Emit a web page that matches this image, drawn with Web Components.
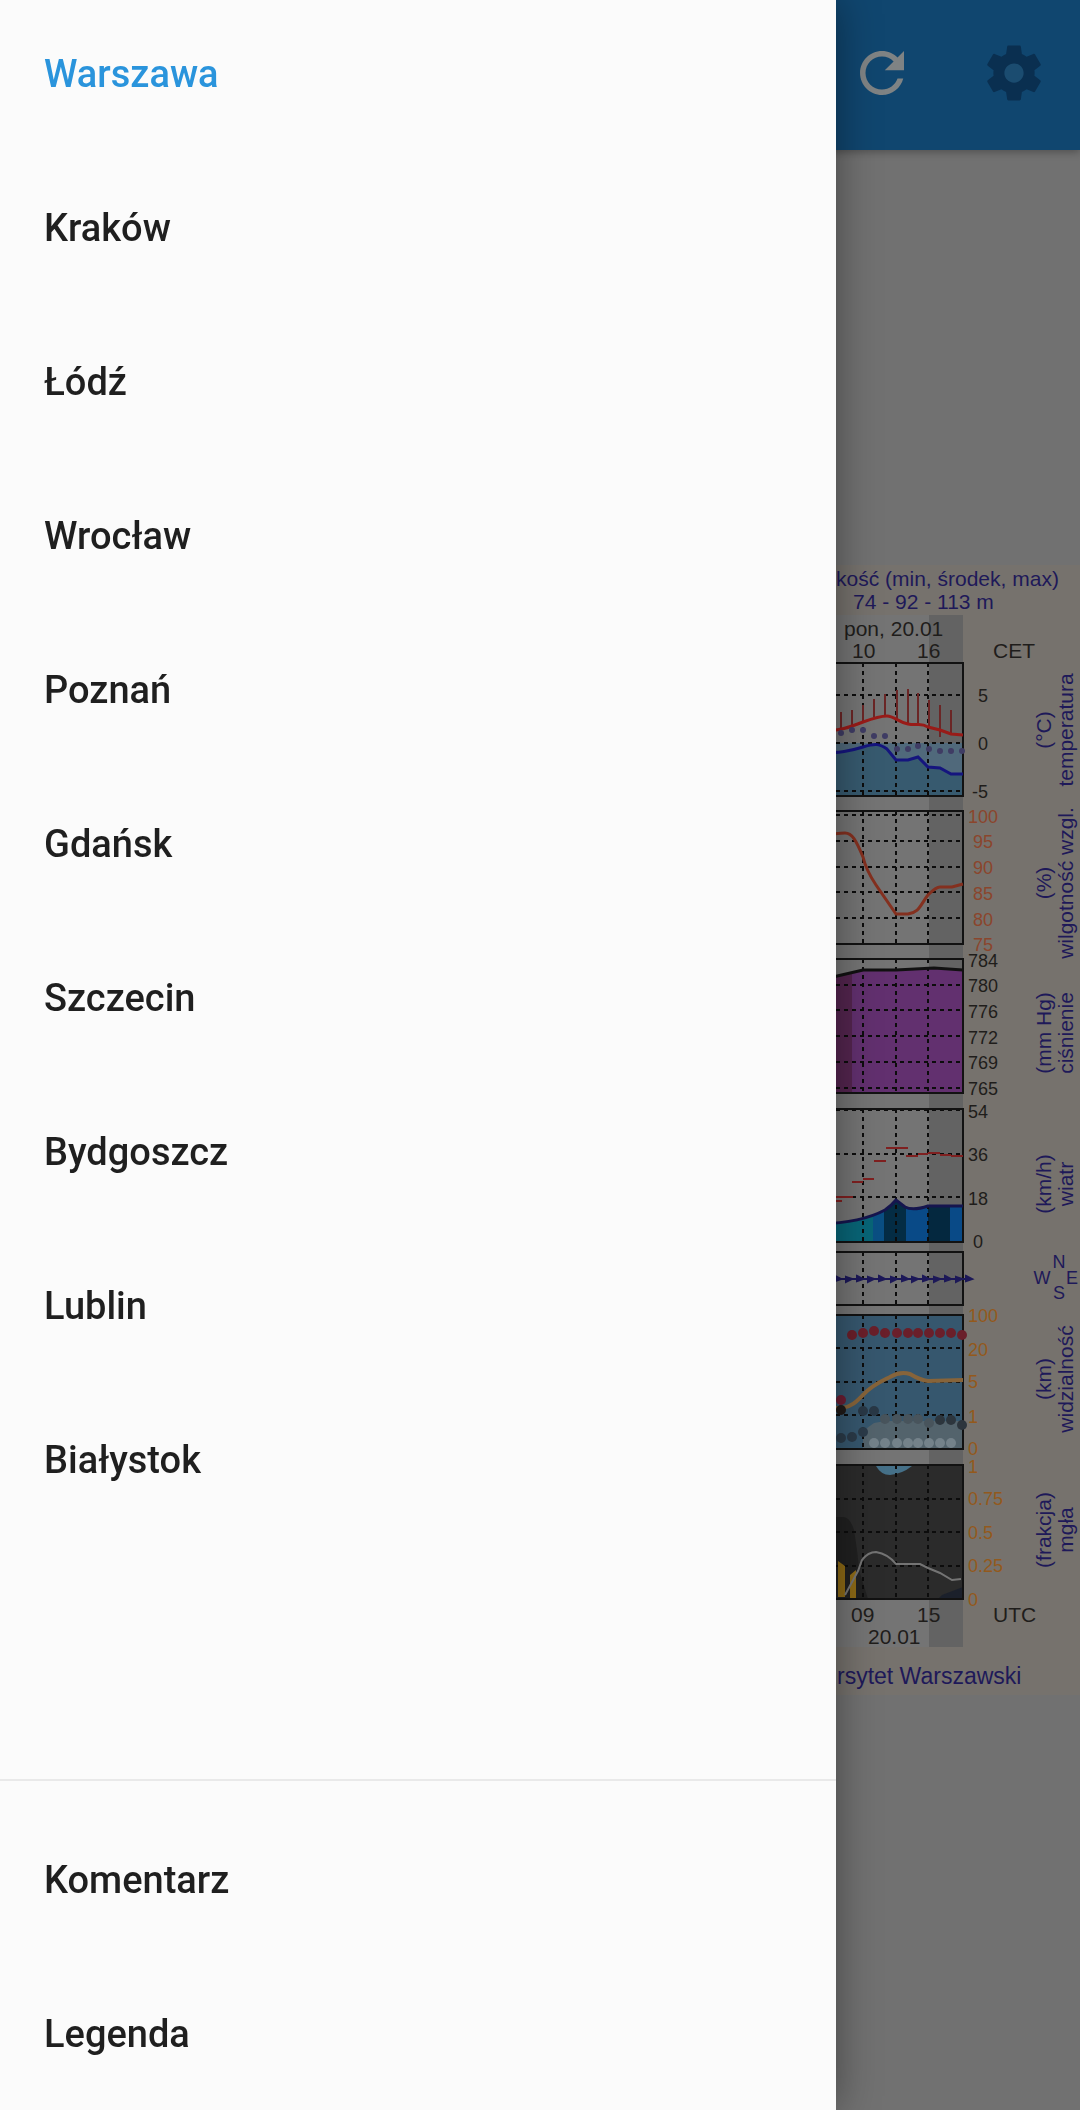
<!DOCTYPE html>
<html lang="pl">
<head>
<meta charset="utf-8">
<meta name="viewport" content="width=device-width, initial-scale=1">
<title>Warszawa</title>
<style>
    body {
        margin: 0;
        font-family: Roboto, "Noto Sans", sans-serif;
        background-color: #717171;
    }
</style>
</head>
<body>
<weather-app></weather-app>

<script>
class AppBar extends HTMLElement {
    constructor() {
        super();
        this.attachShadow({mode: "open"}).innerHTML = `
            <style>
            :host {
                display: flex;
                justify-content: flex-end;
                align-items: center;
                gap: 66px;
                height: 150px;
                box-sizing: border-box;
                padding: 0 33px 4px;
                background-color: #10466f;
                box-shadow: 0 2px 8px rgba(0, 0, 0, 0.3);
            }
            button {
                display: block;
                width: 66px;
                height: 66px;
                padding: 0;
                border: 0;
                background: none;
                color: #7f8384;
                cursor: pointer;
            }
            .settings {
                color: #0a2f50;
            }
            svg {
                display: block;
                width: 100%;
                height: 100%;
                fill: currentColor;
            }
            </style>
            <button aria-label="Odśwież">
                <svg viewBox="0 0 24 24"><path d="M17.65 6.35C16.2 4.9 14.21 4 12 4c-4.42 0-7.99 3.58-7.99 8s3.57 8 7.99 8c3.73 0 6.84-2.55 7.73-6h-2.08c-.82 2.33-3.04 4-5.65 4-3.31 0-6-2.69-6-6s2.69-6 6-6c1.66 0 3.14.69 4.22 1.78L13 11h7V4l-2.35 2.35z"/></svg>
            </button>
            <button class="settings" aria-label="Ustawienia">
                <svg viewBox="0 0 24 24"><circle cx="12" cy="12" r="4" fill="#1b4c70"/><path d="M19.43 12.98c.04-.32.07-.64.07-.98s-.03-.66-.07-.98l2.11-1.65c.19-.15.24-.42.12-.64l-2-3.46c-.12-.22-.39-.3-.61-.22l-2.49 1c-.52-.4-1.08-.73-1.69-.98l-.38-2.65C14.46 2.18 14.25 2 14 2h-4c-.25 0-.46.18-.49.42l-.38 2.65c-.61.25-1.17.59-1.69.98l-2.49-1c-.23-.09-.49 0-.61.22l-2 3.46c-.13.22-.07.49.12.64l2.11 1.65c-.04.32-.07.65-.07.98s.03.66.07.98l-2.11 1.65c-.19.15-.24.42-.12.64l2 3.46c.12.22.39.3.61.22l2.49-1c.52.4 1.08.73 1.69.98l.38 2.65c.03.24.24.42.49.42h4c.25 0 .46-.18.49-.42l.38-2.65c.61-.25 1.17-.59 1.69-.98l2.49 1c.23.09.49 0 .61-.22l2-3.46c.12-.22.07-.49-.12-.64l-2.11-1.65zM12 15.5c-1.93 0-3.5-1.57-3.5-3.5s1.57-3.5 3.5-3.5 3.5 1.57 3.5 3.5-1.57 3.5-3.5 3.5z"/></svg>
            </button>
        `;
    }
}

class DrawerItem extends HTMLElement {
    constructor() {
        super();
        this.attachShadow({mode: "open"}).innerHTML = `
            <style>
            :host {
                display: block;
            }
            a {
                display: flex;
                align-items: center;
                height: 132px;
                padding: 0 44px;
                font-size: 38px;
                font-weight: 500;
                color: #1f1f1f;
                text-decoration: none;
            }
            :host([active]) a {
                color: #2a94dc;
            }
            </style>
            <a href="#"><slot></slot></a>
        `;
    }
}

class NavDrawer extends HTMLElement {
    constructor() {
        super();
        this.attachShadow({mode: "open"}).innerHTML = `
            <style>
            :host {
                display: flex;
                flex-direction: column;
                justify-content: space-between;
                background-color: #fbfbfb;
                box-shadow: 0 0 40px rgba(0, 0, 0, 0.4);
            }
            nav {
                display: flex;
                flex-direction: column;
                gap: 22px;
                padding: 8px 0;
            }
            .more {
                padding: 33px 0 10px;
                border-top: 2px solid #e9e9e9;
            }
            </style>
            <nav><slot></slot></nav>
            <nav class="more"><slot name="more"></slot></nav>
        `;
    }
}

const PANELS = [
    {top: 98, bottom: 231, grid: [130, 178, 226]},
    {top: 246, bottom: 379, grid: [250, 276, 302, 327, 353]},
    {top: 394, bottom: 528, grid: [420, 445, 471, 497, 523]},
    {top: 544, bottom: 677, grid: [545, 589, 632]},
    {top: 687, bottom: 740, grid: []},
    {top: 750, bottom: 884, grid: [783, 817, 850]},
    {top: 900, bottom: 1034, grid: [934, 967, 1001]},
];

// [text, x, y of the middle]
const SCALES = {
    black: [
        ["5", 978, 131], ["0", 978, 179], ["-5", 972, 227],
        ["784", 968, 396], ["780", 968, 421], ["776", 968, 447], ["772", 968, 473], ["769", 968, 498], ["765", 968, 524],
        ["54", 968, 547], ["36", 968, 590], ["18", 968, 634], ["0", 973, 677],
    ],
    red: [
        ["100", 968, 252], ["95", 973, 277], ["90", 973, 303], ["85", 973, 329], ["80", 973, 355], ["75", 973, 380],
    ],
    orange: [
        ["100", 968, 751], ["20", 968, 785], ["5", 968, 817], ["1", 968, 852], ["0", 968, 884],
        ["1", 968, 902], ["0.75", 968, 934], ["0.5", 968, 968], ["0.25", 968, 1001], ["0", 968, 1035],
    ],
};

// [unit, name, y]
const TITLES = [
    ["(°C)", "temperatura", 165],
    ["(%)", "wilgotność wzgl.", 318],
    ["(mm Hg)", "ciśnienie", 468],
    ["(km/h)", "wiatr", 619],
    ["(km)", "widzialność", 814],
    ["(frakcja)", "mgła", 965],
];

const HOURS = [841, 852, 863, 874, 885, 897, 908, 918, 929, 940, 951, 962];

const dots = (ys, r, fill, from = 0) => ys.map((y, i) =>
    `<circle cx="${HOURS[i + from]}" cy="${y}" r="${r}" fill="${fill}"/>`).join("");

class MeteoGram extends HTMLElement {
    constructor() {
        super();
        this.attachShadow({mode: "open"});
    }

    connectedCallback() {
        this.render();
    }

    frames() {
        return PANELS.map(({top, bottom, grid}) => `
            <g class="grid">
                ${grid.map(y => `<path d="M820 ${y}H963"/>`).join("")}
                ${[863, 896, 928].map(x => `<path d="M${x} ${top}V${bottom}"/>`).join("")}
            </g>
            <path class="frame" d="M820 ${top}H963V${bottom}H820"/>
        `).join("");
    }

    whiskers() {
        const spans = [[147, 165], [145, 161], [140, 157], [134, 152], [129, 152], [125, 155], [124, 159], [128, 158], [135, 162], [140, 172], [145, 170]];
        return spans.map(([a, b], i) => `<path d="M${HOURS[i]} ${a}V${b}"/>`).join("");
    }

    arrows() {
        return HOURS.concat([972]).map((x, i) =>
            `<path d="M${x - 12} 714H${x}M${x - 6} ${711 + i % 2}l6 ${3 - i % 2}-6 ${2 + i % 2}z"/>`).join("");
    }

    scales() {
        return Object.entries(SCALES).map(([color, items]) => `
            <g class="scale ${color}">
                ${items.map(([text, x, y]) => `<text x="${x}" y="${y + 6}">${text}</text>`).join("")}
            </g>
        `).join("");
    }

    titles() {
        return TITLES.map(([unit, name, y]) => `
            <text transform="translate(1051 ${y}) rotate(-90)">${unit}</text>
            <text transform="translate(1073 ${y}) rotate(-90)">${name}</text>
        `).join("");
    }

    render() {
        this.shadowRoot.innerHTML = `
            <style>
            :host {
                display: block;
                background-color: #76726d;
            }
            svg {
                display: block;
                width: 100%;
                font-family: "Liberation Sans", Arial, sans-serif;
                font-size: 21px;
            }
            .line, .frame, .grid {
                fill: none;
            }
            .frame {
                stroke: #121212;
                stroke-width: 2;
            }
            .grid {
                stroke: #0c0c0c;
                stroke-width: 2;
                stroke-dasharray: 4 4;
            }
            .scale {
                font-size: 18px;
            }
            .black {
                fill: #1f1d1b;
            }
            .red {
                fill: #8b452c;
            }
            .orange {
                fill: #93591c;
            }
            .blue {
                fill: #1e1959;
            }
            .titles {
                text-anchor: middle;
            }
            .compass {
                font-size: 18px;
            }
            .arrows path {
                fill: #1c1858;
                stroke: #1c1858;
                stroke-width: 2;
            }
            </style>
            <svg viewBox="0 0 1080 1130" role="img" aria-label="Meteogram">
                <rect x="820" y="50" width="109" height="1032" fill="#747474"/>
                <rect x="929" y="50" width="34" height="1032" fill="#636363"/>

                <path d="M820 178H963V231H820z" fill="#50697b"/>
                <path d="M820 188C840 188 850 186 863 182S880 179 887 184L896 195H908L918 192L928 202L940 203L951 209H963V231H820z" fill="#375a6f"/>
                <path d="M820 415L863 405H896L934 403L963 405V528H820z" fill="#62306f"/>
                <path d="M820 415L852 408V528H820z" fill="#54254f"/>
                <clipPath id="wind"><path d="M820 659C850 658 872 652 885 645Q891 641 896 635L905 642Q913 646 928 641H963V677H820z"/></clipPath>
                <g clip-path="url(#wind)">
                    <rect x="820" y="630" width="53" height="47" fill="#086577"/>
                    <rect x="873" y="630" width="11" height="47" fill="#0a4f83"/>
                    <rect x="884" y="630" width="22" height="47" fill="#042c44"/>
                    <rect x="906" y="630" width="22" height="47" fill="#094a87"/>
                    <rect x="928" y="630" width="22" height="47" fill="#04283f"/>
                    <rect x="950" y="630" width="13" height="47" fill="#094a87"/>
                </g>
                <rect x="820" y="750" width="143" height="134" fill="#36576e"/>
                <path d="M863 866L874 858L885 856H963V884H863z" fill="#53636c"/>
                <rect x="820" y="900" width="143" height="134" fill="#2b2b2b"/>
                <path d="M820 952H843Q850 952 854 965Q858 990 859 1005L868 1034H820z" fill="#202020"/>
                <path d="M963 1022L942 1030L938 1034H963z" fill="#1b202b"/>
                <path d="M876 901Q881 910 890 910Q902 909 912 901z" fill="#457088"/>

                ${this.frames()}

                <g stroke="#6b2626" stroke-width="2">${this.whiskers()}</g>
                <path class="line" d="M820 167C845 165 852 161 863 157S880 151 887 151S898 157 908 159S920 157 928 162L940 165L951 169L963 170" stroke="#991b18" stroke-width="3"/>
                <path class="line" d="M820 188C840 188 850 186 863 182S880 179 887 184L896 195H908L918 192L928 202L940 203L951 209H963" stroke="#15157e" stroke-width="3"/>
                ${dots([168, 165, 165, 171, 171, 184, 184, 181, 184, 186, 186, 186], 3, "#3f3c64")}

                <path class="line" d="M820 271Q838 268 845 268C852 268 856 275 863 292Q866 305 876 320L896 349H908C920 347 920 340 928 330Q936 322 940 322H952L963 319" stroke="#84301f" stroke-width="3"/>
                <path class="line" d="M820 415L863 405H896L934 403L963 405" stroke="#111111" stroke-width="3"/>

                <path class="line" d="M820 632H853M820 636H842M852 617H863M863 614H874M874 596H886M886 583H908M906 591H918M918 589H928M928 588H940M940 590H951M951 591H963" stroke="#7f2020" stroke-width="2"/>
                <path class="line" d="M820 659C850 658 872 652 885 645Q891 641 896 635L905 642Q913 646 928 641H963" stroke="#15154e" stroke-width="3"/>
                <g class="arrows">${this.arrows()}</g>

                <path class="line" d="M820 843H842C852 842 858 835 863 830C872 820 882 816 890 812Q900 806 910 809Q920 815 928 816L963 815" stroke="#87643a" stroke-width="4"/>
                <circle cx="841" cy="845" r="5" fill="#201a18"/>
                ${dots([835], 5, "#6c1d32")}
                ${dots([770, 768, 766, 768, 768, 768, 768, 768, 768, 768, 770], 5, "#6a1f2a", 1)}
                ${dots([873, 872, 867], 5, "#2b3b49")}
                ${dots([846, 846], 5, "#293846", 2)}
                ${dots([854, 854, 854, 854, 858], 5, "#48545c", 4)}
                ${dots([855, 855, 860], 5, "#2c353d", 9)}
                ${dots([878, 878, 878, 878, 878, 878, 878, 878], 5, "#74828a", 3)}

                <path d="M838 996L845 1001V1032H838zM850 1010L856 1005V1033H850z" fill="#8d6a16"/>
                <path class="line" d="M845 1030L858 1006L862 995Q868 987 876 987Q888 989 896 999H920L928 1003L940 1008L952 1015L961 1014" stroke="#747474" stroke-width="2"/>

                <g class="blue">
                    <text x="836" y="21">kość (min, środek, max)</text>
                    <text x="853" y="44">74 - 92 - 113 m</text>
                    <text x="837" y="1119" font-size="23">rsytet Warszawski</text>
                </g>
                <g class="black">
                    <text x="844" y="71">pon, 20.01</text>
                    <text x="852" y="93">10</text>
                    <text x="917" y="93">16</text>
                    <text x="993" y="93">CET</text>
                    <text x="851" y="1057">09</text>
                    <text x="917" y="1057">15</text>
                    <text x="993" y="1057">UTC</text>
                    <text x="868" y="1079">20.01</text>
                </g>
                ${this.scales()}
                <g class="blue titles">${this.titles()}</g>
                <g class="blue titles compass">
                    <text x="1059" y="703">N</text>
                    <text x="1042" y="719">W</text>
                    <text x="1072" y="719">E</text>
                    <text x="1059" y="734">S</text>
                </g>
            </svg>
        `;
    }
}

class WeatherApp extends HTMLElement {
    constructor() {
        super();
        this.attachShadow({mode: "open"}).innerHTML = `
            <style>
            :host {
                display: flex;
                flex-direction: column;
                min-height: 100vh;
            }
            main {
                flex: 1;
                display: flex;
                align-items: center;
            }
            meteo-gram {
                flex: 1;
            }
            nav-drawer {
                position: fixed;
                top: 0;
                bottom: 0;
                left: 0;
                width: calc(100% - 244px);
                overflow-y: auto;
            }
            </style>
            <app-bar></app-bar>
            <main><meteo-gram></meteo-gram></main>
            <nav-drawer>
                <drawer-item active>Warszawa</drawer-item>
                <drawer-item>Kraków</drawer-item>
                <drawer-item>Łódź</drawer-item>
                <drawer-item>Wrocław</drawer-item>
                <drawer-item>Poznań</drawer-item>
                <drawer-item>Gdańsk</drawer-item>
                <drawer-item>Szczecin</drawer-item>
                <drawer-item>Bydgoszcz</drawer-item>
                <drawer-item>Lublin</drawer-item>
                <drawer-item>Białystok</drawer-item>
                <drawer-item slot="more">Komentarz</drawer-item>
                <drawer-item slot="more">Legenda</drawer-item>
            </nav-drawer>
        `;
    }
}

customElements.define("app-bar", AppBar);
customElements.define("drawer-item", DrawerItem);
customElements.define("nav-drawer", NavDrawer);
customElements.define("meteo-gram", MeteoGram);
customElements.define("weather-app", WeatherApp);
</script>
</body>
</html>
